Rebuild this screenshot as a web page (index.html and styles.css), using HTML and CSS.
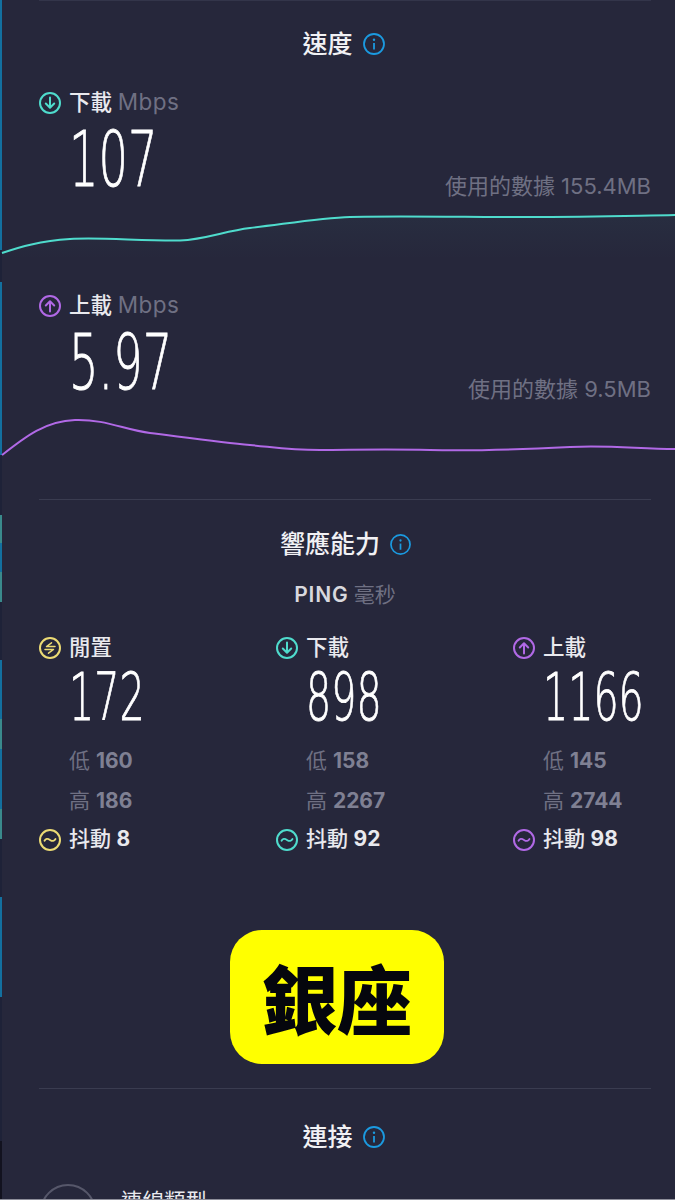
FILE: index.html

```html
<!DOCTYPE html>
<html lang="zh-Hant">
<head>
<meta charset="UTF-8">
<meta name="viewport" content="width=device-width, initial-scale=1.0">
<title>速度</title>
<link rel="stylesheet" href="styles.css">
</head>
<body>
<svg class="defs" width="0" height="0">
    <symbol id="ico-down" viewBox="0 0 22 22"><circle cx="11" cy="11" r="10" fill="none" stroke="currentColor" stroke-width="2"/><path d="M11 5.5v10M6.8 11.5l4.2 4.2 4.2-4.2" fill="none" stroke="currentColor" stroke-width="2" stroke-linecap="round" stroke-linejoin="round"/></symbol>
    <symbol id="ico-up" viewBox="0 0 22 22"><circle cx="11" cy="11" r="10" fill="none" stroke="currentColor" stroke-width="2"/><path d="M11 16.5v-10M6.8 10.5l4.2-4.2 4.2 4.2" fill="none" stroke="currentColor" stroke-width="2" stroke-linecap="round" stroke-linejoin="round"/></symbol>
    <symbol id="ico-idle" viewBox="0 0 22 22"><circle cx="11" cy="11" r="10" fill="none" stroke="currentColor" stroke-width="2"/><path d="M12.5 5.800L7.500 9.500H16M9.500 16.200L14.500 12.500H6" fill="none" stroke="currentColor" stroke-width="1.500" stroke-linecap="round" stroke-linejoin="round"/></symbol>
    <symbol id="ico-jitter" viewBox="0 0 22 22"><circle cx="11" cy="11" r="10" fill="none" stroke="currentColor" stroke-width="2"/><path d="M5.5 11.8c1.2-2.2 3-2.6 5.5-.9s4.300 1.300 5.500-.9" fill="none" stroke="currentColor" stroke-width="1.800" stroke-linecap="round"/></symbol>
    <symbol id="ico-info" viewBox="0 0 22 22"><circle cx="11" cy="11" r="10" fill="none" stroke="currentColor" stroke-width="1.800"/><path d="M11 10v6.500" fill="none" stroke="currentColor" stroke-width="1.800"/><circle cx="11" cy="6.800" r="1.200" fill="currentColor"/></symbol>
</svg>

<div class="page">
    <div class="strip">
        <i class="seg blue s250"></i><i class="seg dark s32"></i><i class="seg blue s173"></i><i class="seg dark s60"></i>
        <i class="seg teal s28"></i><i class="seg blue s29"></i><i class="seg teal s30"></i><i class="seg dark s59"></i>
        <i class="seg blue s59"></i><i class="seg teal s30"></i><i class="seg blue s60"></i><i class="seg teal s30"></i>
        <i class="seg dark s58"></i><i class="seg blue s100"></i><i class="seg dark s144"></i><i class="seg black s58"></i>
    </div>

    <main class="main">
        <div class="topline"></div>

        <section class="speed">
            <h2 class="title"><span class="title-text">速度</span><svg class="info"><use href="#ico-info"/></svg></h2>

            <div class="metric first">
                <div class="label"><svg class="ico cyan"><use href="#ico-down"/></svg><span class="label-text">下載 <span class="unit">Mbps</span></span></div>
                <div class="metric-row">
                    <div class="value big">107</div>
                    <div class="usage">使用的數據 155.4MB</div>
                </div>
                <svg class="chart" width="675" height="70" viewBox="0 200 675 70">
                    <defs>
                        <linearGradient id="glowCyan" x1="0" y1="0" x2="0" y2="1"><stop offset="0" stop-color="#5ce5d6" stop-opacity=".035"/><stop offset="1" stop-color="#5ce5d6" stop-opacity="0"/></linearGradient>
                    </defs>
                    <path d="M2 253C20 247 40 241 70 239S140 241 180 240.500C205 239.500 225 231 250 228C285 224 320 218 350 217S420 216.500 500 217S620 216 675 215V260H2Z" fill="url(#glowCyan)"/>
                    <path d="M2 253C20 247 40 241 70 239S140 241 180 240.500C205 239.500 225 231 250 228C285 224 320 218 350 217S420 216.500 500 217S620 216 675 215" fill="none" stroke="#4fdccd" stroke-width="2"/>
                </svg>
            </div>

            <div class="metric second">
                <div class="label"><svg class="ico purple"><use href="#ico-up"/></svg><span class="label-text">上載 <span class="unit">Mbps</span></span></div>
                <div class="metric-row">
                    <div class="value big">5.97</div>
                    <div class="usage">使用的數據 9.5MB</div>
                </div>
                <svg class="chart" width="675" height="70" viewBox="0 403 675 70">
                    <path d="M2 455C25 437 45 421 75 420S125 430 150 433S220 442 250 445S290 450 320 450S380 449 430 450S530 449 570 447S640 449 675 449" fill="none" stroke="#b169e6" stroke-width="2"/>
                </svg>
            </div>
        </section>

        <div class="rule rule-a"></div>

        <section class="ping">
            <h2 class="title"><span class="title-text">響應能力</span><svg class="info small"><use href="#ico-info"/></svg></h2>
            <div class="ping-head"><span class="ping-word">PING</span> <span class="unit">毫秒</span></div>

            <div class="ping-grid">
                <div class="ping-col">
                    <div class="label"><svg class="ico yellow"><use href="#ico-idle"/></svg><span class="label-text">閒置</span></div>
                    <div class="value">172</div>
                    <div class="stat first-stat">低 <b>160</b></div>
                    <div class="stat">高 <b>186</b></div>
                    <div class="jitter"><svg class="ico yellow"><use href="#ico-jitter"/></svg><span class="label-text">抖動 <b>8</b></span></div>
                </div>
                <div class="ping-col">
                    <div class="label"><svg class="ico cyan"><use href="#ico-down"/></svg><span class="label-text">下載</span></div>
                    <div class="value">898</div>
                    <div class="stat first-stat">低 <b>158</b></div>
                    <div class="stat">高 <b>2267</b></div>
                    <div class="jitter"><svg class="ico cyan"><use href="#ico-jitter"/></svg><span class="label-text">抖動 <b>92</b></span></div>
                </div>
                <div class="ping-col">
                    <div class="label"><svg class="ico purple"><use href="#ico-up"/></svg><span class="label-text">上載</span></div>
                    <div class="value">1166</div>
                    <div class="stat first-stat">低 <b>145</b></div>
                    <div class="stat">高 <b>2744</b></div>
                    <div class="jitter"><svg class="ico purple"><use href="#ico-jitter"/></svg><span class="label-text">抖動 <b>98</b></span></div>
                </div>
            </div>
        </section>

        <div class="badge-wrap"><div class="badge">銀座</div></div>

        <div class="rule"></div>

        <section class="conn">
            <h2 class="title"><span class="title-text">連接</span><svg class="info"><use href="#ico-info"/></svg></h2>
            <div class="conn-row">
                <div class="conn-ring"></div>
                <div class="conn-label">連線類型</div>
            </div>
        </section>
    </main>
</div>
</body>
</html>
```

FILE: styles.css

```css
* {
    box-sizing: border-box;
}

html, body {
    margin: 0;
    padding: 0;
    height: 1200px;
    overflow: hidden;
    background-color: #26273b;
}

body {
    font-family: "Inter", "Noto Sans CJK TC", sans-serif;
    color: #e9e9ee;
}

.defs {
    display: block;
    height: 0;
}

.page {
    display: flex;
    height: 1200px;
    overflow: hidden;
    border-bottom: 1px solid #8d8e9a;
}

/* left edge colour strip */
.strip {
    flex: 0 0 2px;
    display: flex;
    flex-direction: column;
}

.seg { display: block; }
.blue { background-color: #13709f; }
.teal { background-color: #3a8a8c; }
.dark { background-color: #1e2238; }
.black { background-color: #12121f; }
.s250 { height: 250px; }
.s32 { height: 32px; }
.s173 { height: 173px; }
.s60 { height: 60px; }
.s28 { height: 28px; }
.s29 { height: 29px; }
.s30 { height: 30px; }
.s59 { height: 59px; }
.s58 { height: 58px; }
.s100 { height: 100px; }
.s144 { height: 144px; }

.main {
    flex: 1;
    min-width: 0;
    padding: 0 24px 0 37px;
}

.topline {
    height: 1px;
    background-color: #33354a;
}

.title {
    display: flex;
    justify-content: center;
    align-items: center;
    gap: 10px;
    height: 30px;
    margin: 0;
    padding-right: 3px;
    font-size: 25px;
    font-weight: 500;
    color: #f1f1f4;
}

.ping .title {
    padding: 0 0 0 1px;
}

.title-text {
    margin-bottom: 4px;
}

.speed {
    padding-top: 28px;
}

.info {
    width: 22px;
    height: 22px;
    color: #1b9ae0;
}

.info.small {
    width: 21px;
    height: 21px;
}

.metric {
    height: 203px;
}

.metric.first {
    margin-top: 30px;
}

.label {
    display: flex;
    align-items: center;
    height: 28px;
    font-size: 21.500px;
    font-weight: 500;
    line-height: 24px;
    white-space: pre;
}

.label-text {
    margin-bottom: 2px;
}

.ico {
    flex: 0 0 22px;
    width: 22px;
    height: 22px;
    margin-right: 8px;
}

.cyan { color: #4fdccd; }
.purple { color: #b169e6; }
.yellow { color: #ecdb74; }

.unit {
    font-weight: 400;
    color: #6f7083;
}

.label .unit {
    font-size: 22.500px;
    letter-spacing: .5px;
}

.metric-row {
    display: flex;
    justify-content: space-between;
    align-items: flex-end;
    margin-top: 13px;
    padding-left: 30px;
}

.value {
    font-family: "DejaVu Sans", sans-serif;
    font-weight: 200;
    color: #fff;
    -webkit-text-stroke: .9px #fff;
    transform-origin: left center;
    white-space: nowrap;
}

.value.big {
    height: 60px;
    line-height: 60px;
    font-size: 76px;
    transform: scaleX(.61);
}

.usage {
    font-size: 22px;
    color: #6f7083;
    line-height: 28px;
    margin-bottom: -10px;
}

.chart {
    display: block;
    margin: 10px 0 0 -39px;
}

.rule {
    height: 1px;
    background-color: #3a3c50;
}

.rule-a {
    margin-top: 4px;
}

.ping {
    padding-top: 29px;
}

.ping-head {
    margin-top: 22px;
    height: 28px;
    line-height: 28px;
    text-align: center;
    font-size: 21px;
    font-weight: 600;
    color: #d8d8de;
}

.ping-word {
    letter-spacing: .8px;
}

.ping-head .unit {
    font-weight: 400;
}

.ping-grid {
    display: grid;
    grid-template-columns: 237px 237px 1fr;
    margin-top: 25px;
}

.ping-col .value {
    height: 58px;
    line-height: 58px;
    margin: 7px 0 0 30px;
    font-size: 66px;
    transform: scaleX(.6);
}

.stat {
    height: 40px;
    line-height: 40px;
    padding-left: 30px;
    font-size: 21px;
    color: #6f7083;
}

.first-stat {
    margin-top: 14px;
}

.stat b {
    font-weight: 700;
    color: #7f8093;
}

.jitter {
    display: flex;
    align-items: center;
    height: 38px;
    font-size: 21px;
    font-weight: 500;
    line-height: 24px;
    white-space: pre;
}

.jitter b {
    font-weight: 700;
}

.badge-wrap {
    display: flex;
    justify-content: center;
    height: 229px;
    padding-top: 71px;
    margin-left: -16px;
}

.badge {
    width: 214px;
    height: 134px;
    border-radius: 32px;
    background-color: #ffff00;
    color: #05060d;
    font-family: "Noto Sans CJK TC", sans-serif;
    font-size: 75px;
    font-weight: 900;
    line-height: 134px;
    text-align: center;
}

.conn {
    padding-top: 33px;
}

.conn-row {
    display: flex;
    gap: 25px;
    margin-top: 32px;
}

.conn-ring {
    flex: 0 0 56px;
    width: 56px;
    height: 56px;
    margin-left: 1px;
    border: 2px solid #56576a;
    border-radius: 50%;
}

.conn-label {
    margin-top: 3px;
    font-size: 21.500px;
    line-height: 28px;
    color: #e9e9ee;
}
```
